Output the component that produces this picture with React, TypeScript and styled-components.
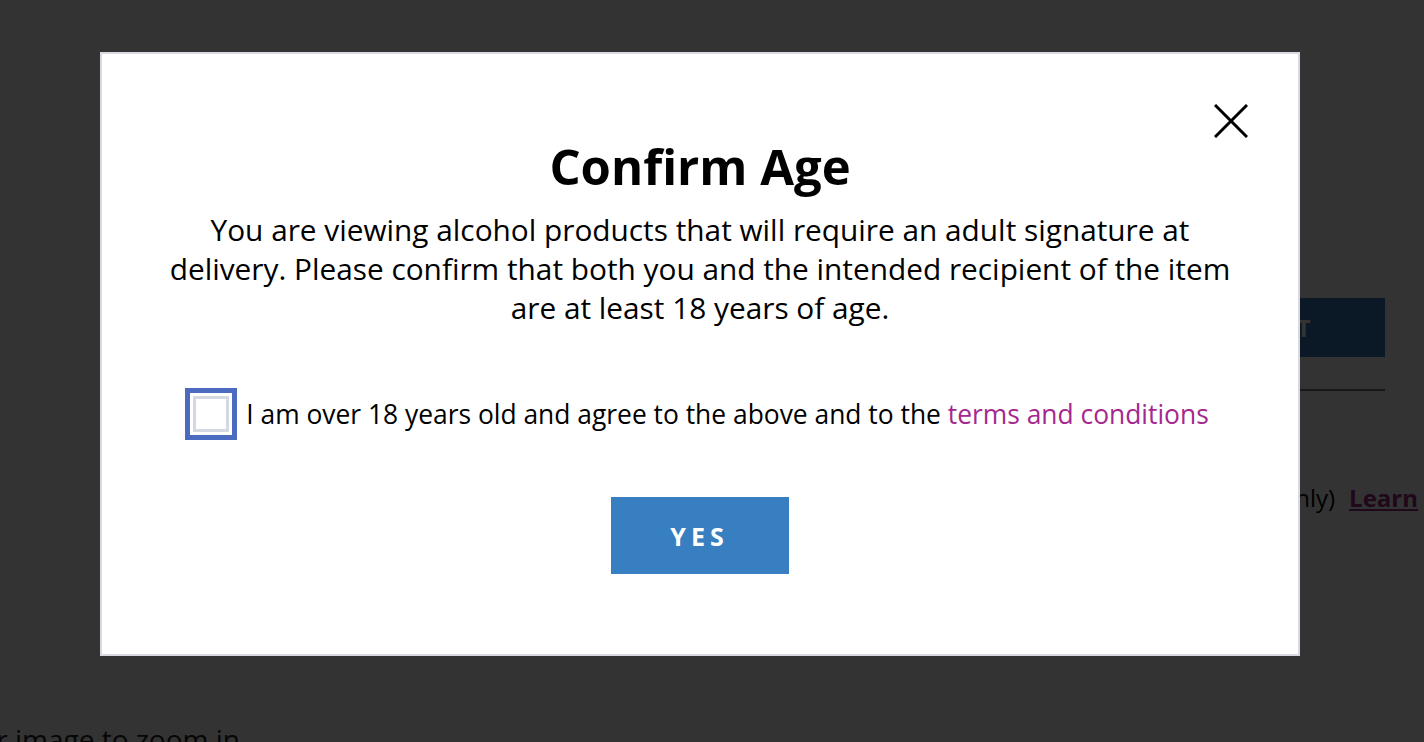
import React from "react";
import styled, { createGlobalStyle } from "styled-components";

const GlobalStyle = createGlobalStyle`
  html, body {
    margin: 0;
    padding: 0;
    background: #ffffff;
    font-family: "Open Sans", "Liberation Sans", sans-serif;
    color: #000000;
    overflow: hidden;
  }
`;

const Page = styled.div`
  width: 1424px;
  height: 742px;
  display: flex;
  overflow: hidden;
`;

const Gallery = styled.section`
  width: 240px;
  flex-shrink: 0;
  display: flex;
  flex-direction: column;
  justify-content: flex-end;
`;

const GalleryHint = styled.p`
  margin: 0 0 -16px 0;
  font-size: 28px;
  color: #222;
  white-space: nowrap;
  direction: rtl;
  text-align: right;
`;

const Details = styled.section`
  width: 385px;
  flex-shrink: 0;
  margin-left: 760px;
  padding-top: 298px;
  display: flex;
  flex-direction: column;
`;

const CartButton = styled.button`
  height: 59px;
  border: none;
  background: #377fc0;
  color: #ffffff;
  font-family: inherit;
  font-size: 24px;
  font-weight: 700;
  letter-spacing: 5px;
  padding-left: 38px;
`;

const Rule = styled.hr`
  margin: 32px 0 0;
  border: none;
  border-top: 2px solid #777;
`;

const ShipNote = styled.p`
  margin: 90px -33px 0 0;
  white-space: nowrap;
  font-size: 24px;
  direction: rtl;
  text-align: right;
`;

const LearnLink = styled.a`
  color: #9a2a86;
  font-weight: 700;
  text-decoration: underline;
  margin-left: 14px;
`;

const Overlay = styled.div`
  position: fixed;
  inset: 0;
  background: rgba(0, 0, 0, 0.8);
  display: flex;
  align-items: flex-start;
  padding: 52px 0 0 100px;
`;

const Modal = styled.div`
  position: relative;
  width: 1200px;
  height: 604px;
  box-sizing: border-box;
  background: #ffffff;
  border: 2px solid #d9d9e3;
  display: flex;
  flex-direction: column;
  align-items: center;
  padding-top: 84px;
`;

const CloseButton = styled.button`
  position: absolute;
  top: 50px;
  right: 50px;
  width: 34px;
  height: 34px;
  padding: 0;
  border: none;
  background: none;
  cursor: pointer;
`;

const Title = styled.h2`
  margin: 0;
  font-size: 49px;
  line-height: 56px;
  font-weight: 700;
`;

const Lead = styled.p`
  margin: 16px 0 0;
  width: 1084px;
  text-align: center;
  font-size: 29.8px;
  line-height: 39px;
`;

const AgreeRow = styled.label`
  margin-top: 61px;
  display: flex;
  align-items: center;
  gap: 9px;
  font-size: 26.4px;
  cursor: pointer;
  margin-right: 6px;
`;

const CheckFrame = styled.span`
  width: 52px;
  height: 52px;
  box-sizing: border-box;
  border: 5px solid #4a6bbf;
  padding: 3px;
  display: flex;
`;

const CheckBox = styled.span`
  flex: 1;
  border: 3px solid #d3d8e2;
  background: #fff;
`;

const TermsLink = styled.a`
  color: #a5288f;
  text-decoration: none;
`;

const YesButton = styled.button`
  margin-top: 57px;
  width: 178px;
  height: 77px;
  border: none;
  background: #377fc0;
  color: #ffffff;
  font-family: inherit;
  font-size: 25px;
  font-weight: 700;
  letter-spacing: 5px;
  padding-left: 5px;
  cursor: pointer;
`;

export default function App() {
  return (
    <>
      <GlobalStyle />
      <Page>
        <Gallery>
          <GalleryHint>
            <span dir="ltr">Roll over image to zoom in</span>
          </GalleryHint>
        </Gallery>
        <Details>
          <CartButton>ADD TO CART</CartButton>
          <Rule />
          <ShipNote>
            <span dir="ltr">
              (Ships to US addresses only)
              <LearnLink href="#">Learn</LearnLink>
            </span>
          </ShipNote>
        </Details>
      </Page>
      <Overlay>
        <Modal role="dialog" aria-modal="true">
          <CloseButton aria-label="Close">
            <svg width="34" height="34" viewBox="0 0 34 34">
              <path d="M1 1 L33 33 M33 1 L1 33" stroke="#000" strokeWidth="3" />
            </svg>
          </CloseButton>
          <Title>Confirm Age</Title>
          <Lead>
            You are viewing alcohol products that will require an adult
            signature at delivery. Please confirm that both you and the
            intended recipient of the item are at least 18 years of age.
          </Lead>
          <AgreeRow>
            <CheckFrame>
              <CheckBox />
            </CheckFrame>
            <span>
              I am over 18 years old and agree to the above and to the{" "}
              <TermsLink href="#">terms and conditions</TermsLink>
            </span>
          </AgreeRow>
          <YesButton>YES</YesButton>
        </Modal>
      </Overlay>
    </>
  );
}
